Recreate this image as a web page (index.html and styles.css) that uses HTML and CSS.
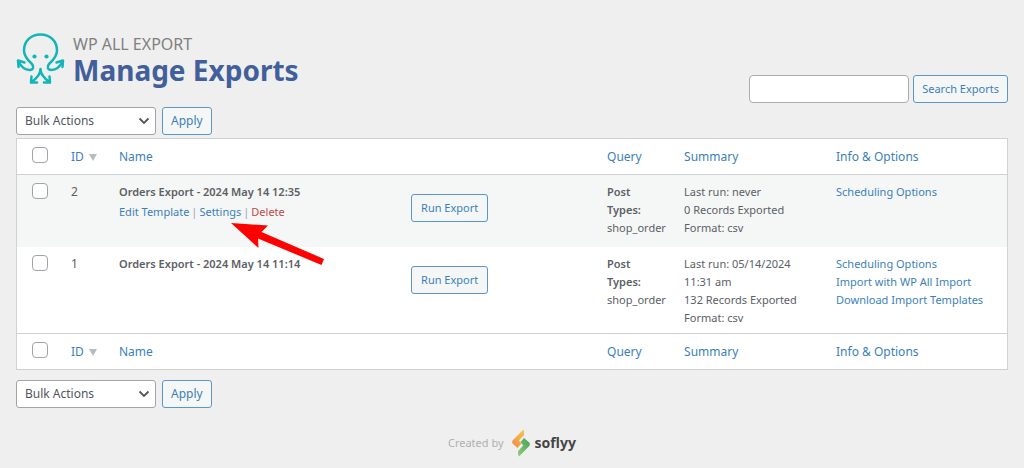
FILE: index.html
```html
<!DOCTYPE html>
<html lang="en">
<head>
<meta charset="utf-8">
<title>Manage Exports</title>
<meta name="viewport" content="width=device-width, initial-scale=1">
<link rel="stylesheet" href="styles.css">
</head>
<body>
<main class="page">
  <header class="header">
    <div class="brand">
      <svg class="brand-logo" viewBox="0 0 50 52" aria-hidden="true">
        <g fill="none" stroke="#12b5b8" stroke-width="2.5" stroke-linecap="round" stroke-linejoin="round">
          <path d="M2.500 29.500C5 34.500 9 38 13.500 38C17.500 38 18.500 34.500 15.500 31.500C11 27.500 8 24 8 18.500C8 9 15 2.500 24.500 2.500S41 9 41 18.500C41 24 38 27.500 33.500 31.500C30.500 34.500 31.500 38 35.500 38C40 38 44 34.500 46.500 29.500"/>
          <path d="M2.500 35L2 28.500L8.500 30.500M46.500 35L47 28.500L40.500 30.500"/>
          <path d="M24.500 37C24.500 43 20.500 46.500 15.500 50M24.500 37C24.500 43 28.500 46.500 33.500 50"/>
          <path d="M15.500 44.500L15 50.500H21M33.500 44.500L34 50.500H28"/>
        </g>
        <g fill="#12b5b8"><circle cx="18.500" cy="24.500" r="2.100"/><circle cx="30.500" cy="24.500" r="2.100"/></g>
      </svg>
      <div class="brand-text">
        <p class="brand-name">WP ALL EXPORT</p>
        <h1 class="title">Manage Exports</h1>
      </div>
    </div>
    <form class="search">
      <input class="field" type="search" aria-label="Search exports">
      <button class="button" type="button">Search Exports</button>
    </form>
  </header>

  <div class="actions actions-top">
    <span class="select-wrap">
      <select class="select" aria-label="Bulk actions"><option>Bulk Actions</option></select>
      <svg class="chevron" viewBox="0 0 12 8" aria-hidden="true"><path d="M1.500 1.500L6 6L10.500 1.500" fill="none" stroke="#50575e" stroke-width="1.800"/></svg>
    </span>
    <button class="button apply" type="button">Apply</button>
  </div>

  <table class="exports">
    <colgroup>
      <col class="col-check"><col class="col-id"><col class="col-name"><col class="col-run"><col class="col-query"><col class="col-summary"><col class="col-info">
    </colgroup>
    <thead>
      <tr>
        <th><input class="check" type="checkbox" aria-label="Select all"></th>
        <th><a href="#">ID <span class="sort"></span></a></th>
        <th><a href="#">Name</a></th>
        <th></th>
        <th><a href="#">Query</a></th>
        <th><a href="#">Summary</a></th>
        <th><a href="#">Info &amp; Options</a></th>
      </tr>
    </thead>
    <tbody>
      <tr class="alt">
        <td><input class="check" type="checkbox" aria-label="Select export 2"></td>
        <td class="id">2</td>
        <td class="name">
          <strong>Orders Export - 2024 May 14 12:35</strong>
          <div class="row-links"><a href="#">Edit Template</a><span>|</span><a class="pointed" href="#">Settings<svg class="pointer" viewBox="0 0 94 42" aria-hidden="true"><path d="M0 0L37 2.500L30.500 9L93 36L90.500 42L27 15.500L27.500 25Z" fill="#fe0000"/></svg></a><span>|</span><a class="delete" href="#">Delete</a></div>
        </td>
        <td class="run"><button class="button" type="button">Run Export</button></td>
        <td class="query"><strong>Post Types:</strong> shop_order</td>
        <td>Last run: never<br>0 Records Exported<br>Format: csv</td>
        <td><a href="#">Scheduling Options</a></td>
      </tr>
      <tr>
        <td><input class="check" type="checkbox" aria-label="Select export 1"></td>
        <td class="id">1</td>
        <td class="name"><strong>Orders Export - 2024 May 14 11:14</strong></td>
        <td class="run"><button class="button" type="button">Run Export</button></td>
        <td class="query"><strong>Post Types:</strong> shop_order</td>
        <td>Last run: 05/14/2024<br>11:31 am<br>132 Records Exported<br>Format: csv</td>
        <td><a href="#">Scheduling Options</a><br><a href="#">Import with WP All Import</a><br><a href="#">Download Import Templates</a></td>
      </tr>
    </tbody>
    <tfoot>
      <tr>
        <th><input class="check" type="checkbox" aria-label="Select all"></th>
        <th><a href="#">ID <span class="sort"></span></a></th>
        <th><a href="#">Name</a></th>
        <th></th>
        <th><a href="#">Query</a></th>
        <th><a href="#">Summary</a></th>
        <th><a href="#">Info &amp; Options</a></th>
      </tr>
    </tfoot>
  </table>

  <div class="actions actions-bottom">
    <span class="select-wrap">
      <select class="select" aria-label="Bulk actions"><option>Bulk Actions</option></select>
      <svg class="chevron" viewBox="0 0 12 8" aria-hidden="true"><path d="M1.500 1.500L6 6L10.500 1.500" fill="none" stroke="#50575e" stroke-width="1.800"/></svg>
    </span>
    <button class="button apply" type="button">Apply</button>
  </div>

  <footer class="footer">
    <span>Created by</span>
    <a class="maker" href="#">
      <svg class="maker-logo" viewBox="0 0 18 28" aria-hidden="true">
        <defs>
          <linearGradient id="warm" x1="1" y1="0" x2="0" y2="1"><stop offset="0" stop-color="#f2c744"/><stop offset="1" stop-color="#f58a4b"/></linearGradient>
          <linearGradient id="leaf" x1="1" y1="0" x2="0" y2="1"><stop offset="0" stop-color="#43a05c"/><stop offset="1" stop-color="#8fce77"/></linearGradient>
        </defs>
        <path d="M11.500 .5Q12.500 3 12 6L7 11.500L9.500 14.500L5.500 19L.8 14.800Q-.5 13 .8 11.300Z" fill="url(#warm)"/>
        <path d="M12 9L17.200 13.500Q18.500 15 17.200 17L7 27.500Q5.500 25 6.200 22L11.200 16.500L8.500 13Z" fill="url(#leaf)"/>
      </svg>
      <span>soflyy</span>
    </a>
  </footer>
</main>
</body>
</html>
```
FILE: styles.css
```css
* { box-sizing: border-box; }

body {
  margin: 0;
  background: #efefef;
  color: #5b6065;
  font: 11px/18px "Noto Sans", sans-serif;
}

a { color: #3c7fb8; text-decoration: none; }
strong { font-weight: 600; }

.page { padding: 32px 16px 8px; }

.header {
  display: flex;
  justify-content: space-between;
  align-items: flex-end;
}

.brand { display: flex; gap: 7px; }
.brand-logo { width: 50px; height: 52px; }
.brand-name { margin: 3px 0 0; color: #808080; font-size: 16px; line-height: 18px; }
.title { margin: 0; color: #425f9b; font: 700 28px/34px "Noto Sans", sans-serif; }

.search { display: flex; gap: 4px; margin-bottom: -16px; }

.field {
  width: 160px;
  height: 28px;
  border: 1px solid #a9acb0;
  border-radius: 4px;
  background: #fff;
  appearance: none;
}

.button {
  height: 28px;
  padding: 0 8px;
  border: 1px solid #5b96c8;
  border-radius: 3px;
  background: #f5f7f7;
  color: #3c7fb8;
  font: 11px/18px "Noto Sans", sans-serif;
}
.apply { font-size: 12px; }

.actions { display: flex; gap: 6px; }
.actions-top { margin: 20px 0 3px; }
.actions-bottom { margin-top: 10px; }

.select-wrap { position: relative; }

.select {
  display: block;
  width: 140px;
  height: 28px;
  padding: 0 8px;
  border: 1px solid #a1a5a9;
  border-radius: 3px;
  background: #fff;
  color: #50575e;
  font: 12px/18px "Noto Sans", sans-serif;
  appearance: none;
}

.chevron { position: absolute; right: 6px; top: 10px; width: 12px; height: 8px; pointer-events: none; }

.exports {
  width: 100%;
  table-layout: fixed;
  border: 1px solid #cfd1d4;
  border-collapse: separate;
  border-spacing: 0;
  background: #fff;
}

.col-check { width: 46px; }
.col-id { width: 48px; }
.col-name { width: 29.5%; }
.col-run { width: 196px; }
.col-query { width: 77px; }
.col-summary { width: 152px; }

th { height: 36px; padding: 1px 8px 0; font-size: 12px; font-weight: 400; text-align: left; }
thead th { border-bottom: 1px solid #cfd1d4; }
tfoot th { border-top: 1px solid #cfd1d4; }
td { padding: 8px 8px 6px; vertical-align: top; }
th:first-child, td:first-child { padding-left: 15px; }
.alt td { background: #f5f7f7; }
.id { font-size: 12px; }
.exports .run { padding: 19px 8px 25px; }
.exports .query { padding-right: 10px; }
.run .button { display: block; padding: 0 9px; }

.check {
  display: block;
  width: 16px;
  height: 16px;
  margin: 0;
  border: 1px solid #a1a5a9;
  border-radius: 4px;
  background: #fff;
  appearance: none;
}
th .check { margin-bottom: 4px; }

.sort {
  display: inline-block;
  margin-left: 2px;
  border: solid transparent;
  border-width: 7px 4px 0;
  border-top-color: #b9bcbf;
}

.row-links { display: flex; gap: 2px; padding-top: 2px; color: #a0a3a6; }
.delete { color: #be4a4a; }
.pointed { position: relative; }
.pointer { position: absolute; left: 32px; top: 20px; width: 94px; height: 42px; pointer-events: none; }

.footer {
  display: flex;
  justify-content: center;
  align-items: center;
  gap: 8px;
  margin-top: 21px;
  color: #b0b0b0;
  font-size: 11px;
}
.maker { display: flex; align-items: center; gap: 5px; color: #454545; font-size: 14px; font-weight: 700; }
.maker-logo { width: 18px; height: 28px; }
```
